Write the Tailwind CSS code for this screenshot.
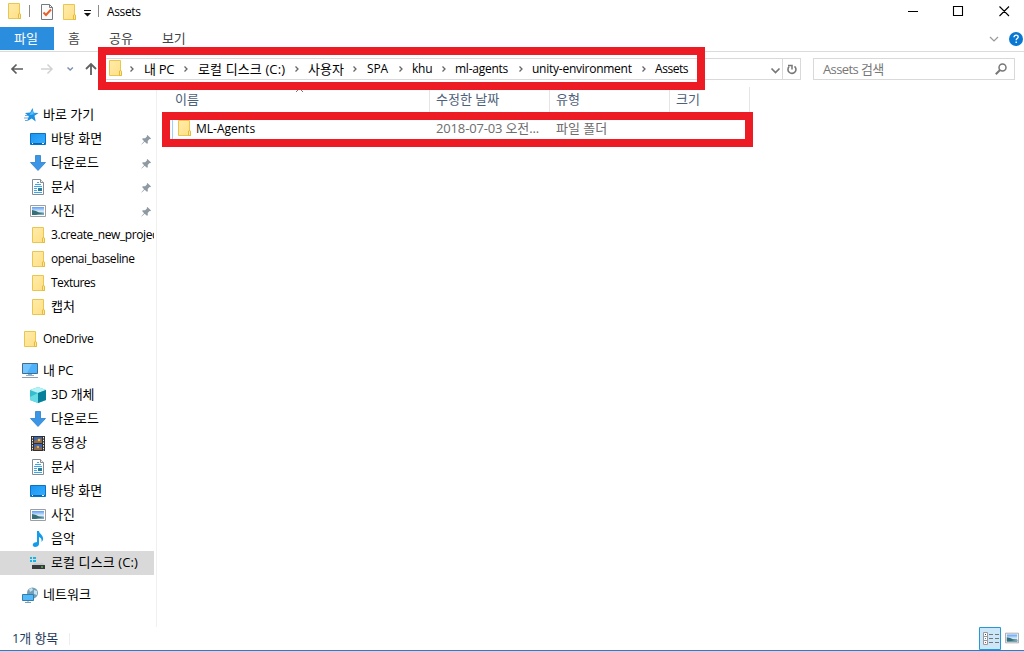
<!DOCTYPE html>
<html lang="ko">
<head>
<meta charset="utf-8">
<title>Assets</title>
<script src="https://cdn.jsdelivr.net/npm/@tailwindcss/browser@4"></script>
</head>
<body class="relative flex h-[651px] w-[1024px] flex-col overflow-hidden whitespace-nowrap bg-white font-['Open_Sans','Noto_Sans_CJK_KR',sans-serif] text-[13px] leading-none text-black">
<svg class="absolute h-0 w-0">
  <defs>
    <linearGradient id="blue" x1="0" y1="0" x2="1" y2="1"><stop offset="0" stop-color="#1c94f0"/><stop offset="1" stop-color="#35b0ff"/></linearGradient>
    <linearGradient id="fold" x1="0" y1="0" x2="1" y2="1"><stop offset="0" stop-color="#ffebaa"/><stop offset="1" stop-color="#ffdf84"/></linearGradient>
    <linearGradient id="sky" x1="0" y1="0" x2="0" y2="1"><stop offset="0" stop-color="#5d9df5"/><stop offset=".55" stop-color="#d9ecf7"/><stop offset="1" stop-color="#4484a0"/></linearGradient>
  </defs>
  <symbol id="folder" viewBox="0 0 16 16"><path d="M2.500.500h11v10l1 1v4h-12z" fill="url(#fold)" stroke="#e8c64f"/><path d="M12.500 15.500v-4.500l1.500-.5.500 1v4z" fill="#ffe79b" stroke="#e5bb3d"/></symbol>
  <symbol id="star" viewBox="0 0 16 16"><path d="M9.500 1l1.200 4.700 4.800.3-4 2.800 1.200 5.700-4-3-4.700 2.700 1.800-5L2 6l5.200-.4z" fill="#1d8fe1"/><path d="M9.500 3l.8 3.500 3 .2-7 1.600z" fill="#55bdf7"/><path d="M2 8.500h3M1 11h4M2 13.500h2" stroke="#68a9d9"/></symbol>
  <symbol id="desktop" viewBox="0 0 16 16"><path d="M.5 2.500h15v11H.5z" fill="url(#blue)" stroke="#0873c4"/><path d="M1 12.500h14" stroke="#0866b0"/><path d="M2 12.500h1m9 0h2" stroke="#fff"/></symbol>
  <symbol id="down" viewBox="0 0 16 16"><path d="M5.500.500h5v7h5L8 15.500.5 7.500h5z" fill="#3c96e6" stroke="#2b7fcb" stroke-width=".8"/></symbol>
  <symbol id="doc" viewBox="0 0 16 16"><path d="M2.500.500h8l3 3v12h-11z" fill="#fff" stroke="#858c91"/><path d="M10.500.500v3h3" fill="#eee" stroke="#858c91"/><path d="M5 5.500h2m0-2h2m-2 2h4M4 7.500h8M4 9.500h3M4 11.500h3M4 13.500h8" stroke="#3da5ec"/><path d="M8 9h4v3H8z" fill="#2b7f9e"/></symbol>
  <symbol id="picture" viewBox="0 0 16 16"><path d="M.5 2.500h15v11H.5z" fill="#fff" stroke="#9b9fa3"/><path d="M2 4h12v8H2z" fill="url(#sky)"/><path d="M2 7l4 1 3 1.500 5 .5v2H2z" fill="#386f76"/><path d="M7 11.500l7-1.500v2H6z" fill="#78a9bd"/></symbol>
  <symbol id="pc" viewBox="0 0 16 16"><path d="M.5.500h15v10H.5z" fill="url(#blue)" stroke="#426d8b"/><path d="M1 1h14v9H1z" fill="#4db2fb"/><path d="M1 1h9L5 10H1z" fill="#72c5ff"/><path d="M6 11h4v1h2v1H4v-1h2z" fill="#8fb0c7"/><path d="M0 14.500h16" stroke="#8a9db6"/></symbol>
  <symbol id="cube" viewBox="0 0 16 16"><path d="M8 0l8 3v10l-8 3-8-3V3z" fill="#35bdcf"/><path d="M0 3l8-3 8 3-8 3z" fill="#b5f2f5"/><path d="M8 6l8-3v10l-8 3z" fill="#087f9a"/><path d="M0 10l8-4v10l-8-3z" fill="#67dce5"/></symbol>
  <symbol id="film" viewBox="0 0 16 16"><path d="M1 1h14v15H1z" fill="#303030"/><path d="M2.500 2v14m11-14v14" stroke="#f2f2f2" stroke-dasharray="1.500 1.200"/><path d="M4 2h8v6H4zM4 9h8v6H4z" fill="#3b65b5"/><path d="M4 6l3-2 1 2 3-3 1 2v3H4zM4 13l3-3 2 3 3-1v3H4z" fill="#8f6a4c"/><circle cx="9" cy="5" r="1.300" fill="#f1c23a"/><circle cx="8" cy="12" r="1.200" fill="#e6ae38"/></symbol>
  <symbol id="music" viewBox="0 0 16 16"><path d="M7 0h2c0 3 5 4 4 9l-1.500 2c.5-3-.5-4-2.500-5v7c0 2-2 3-4 3-3 0-3-4 0-4.500L7 11z" fill="#149be9"/></symbol>
  <symbol id="disk" viewBox="0 0 16 16"><path d="M0 2h2v2H0zM3 2h3v2H3zM0 5h2v2H0zM3 5h3v2H3z" fill="#16b5e9"/><path d="M4 8h9l2 2.500H2z" fill="#c7cbcd"/><path d="M2 10h13v4H2z" fill="#38393b"/><path d="M11 12h2" stroke="#4df047"/></symbol>
  <symbol id="network" viewBox="0 0 16 16"><circle cx="10.500" cy="6" r="5.500" fill="#759fb7"/><path d="M7 2l3-1 1 2-3 2zM12 3l3 1v4l-3-1z" fill="#c8e3ef"/><path d="M.5 7.500h11v6H.5z" fill="#54b9fb" stroke="#347da9"/><path d="M6 14v1M3 15.500h6" stroke="#7e9eb2"/></symbol>
  <symbol id="pin" viewBox="0 0 12 12"><path d="M7 1l4 4-1 .7-.7-.2-2 2 .2 2.500-1 .7L4 8.500.800 11.500l-.4-.4L3.400 8 1.200 5.500l.8-1 2.500.2 2-2L6.300 2z" fill="#8e9aa3"/></symbol>
  <symbol id="chev" viewBox="0 0 6 8"><path d="M1.500 1.500l2.500 2.500-2.500 2.500" fill="none" stroke="#666" stroke-width="1.300"/></symbol>
</svg>

<header class="flex h-[26px] shrink-0 items-start">
  <svg class="ml-1.5 mt-[3px] size-4"><use href="#folder"/></svg>
  <i class="ml-[7px] mt-[5px] h-3 w-px bg-[#8b8b8b]"></i>
  <svg class="ml-[9px] mt-1 h-4 w-4" viewBox="0 0 16 16"><path d="M2.500.500h8l3 3v12h-11z" fill="#fafafa" stroke="#747b80"/><path d="M10.500.500v3h3" fill="none" stroke="#747b80"/><path d="M4.500 8.500L7 11l5-5.500" fill="none" stroke="#e65e2b" stroke-width="1.900"/></svg>
  <svg class="ml-1.5 mt-1 size-4"><use href="#folder"/></svg>
  <svg class="ml-[7px] mt-[10px] h-[7px] w-[7px]" viewBox="0 0 7 7"><path d="M0 0h7v1H0zM0 3h7L3.500 6.500z" fill="#111"/></svg>
  <i class="ml-[7px] mt-[5px] h-3 w-px bg-[#8b8b8b]"></i>
  <span class="ml-[8px] mt-[5px] text-[12px] leading-[14px] tracking-[-.35px]">Assets</span>
  <svg class="ml-auto h-6 w-[124px]" viewBox="0 0 124 24"><path d="M8 11.500h10M53.500 6.500h9v9h-9zM99.500 6.500l9.500 9.500m0-9.500L99.500 16" fill="none" stroke="#000" stroke-width="1.100"/></svg>
</header>

<nav class="flex h-[26px] shrink-0 items-start border-b border-[#dadbdc] leading-[23px] text-[#444]">
  <span class="mt-px h-[23px] w-[54px] bg-[#2a8dde] pr-[2px] text-center text-white">파일</span>
  <span class="mt-px ml-[14px]">홈</span>
  <span class="mt-px ml-[29px]">공유</span>
  <span class="mt-px ml-[29px]">보기</span>
  <svg class="ml-auto h-[24px] w-[36px]" viewBox="0 0 36 24"><path d="M2 11l4 4 4-4" fill="none" stroke="#999" stroke-width="1.200"/><circle cx="28" cy="13" r="7" fill="#0878d2"/><path d="M26 11.300c0-3 4.200-2.600 4.200-.3 0 1.600-2 1.500-2 3.200m0 1.300v1.500" stroke="#fff" stroke-width="1.400" fill="none"/></svg>
</nav>

<section class="flex h-[35px] shrink-0 items-start pt-[6px]">
  <svg class="h-[22px] w-[98px]" viewBox="0 0 98 22" fill="none"><path d="M12 11h11M16.500 6.500L12 11l4.500 4.500" stroke="#5d5d5d" stroke-width="1.700"/><path d="M41 11h11M47.500 6.500L52 11l-4.500 4.500" stroke="#d2d2d2" stroke-width="1.500"/><path d="M67.500 9.500l2.700 2.500 2.700-2.500" stroke="#7c91ad" stroke-width="1.500"/><path d="M91 17V6M86 11l5-5 5 5" stroke="#606060" stroke-width="1.800"/></svg>
  <div class="flex h-[22px] w-[703px] items-center border border-[#d9d9d9]">
    <svg class="ml-[8px] mb-[2px] size-4 shrink-0"><use href="#folder"/></svg>
    <svg class="ml-[6px] h-2 w-1.5"><use href="#chev"/></svg><span class="ml-[9px] w-[31px] tracking-[-.3px]">내 PC</span>
    <svg class="ml-[8px] h-2 w-1.5"><use href="#chev"/></svg><span class="ml-[9px] w-[87px] tracking-[.12px]">로컬 디스크 (C:)</span>
    <svg class="ml-[9px] h-2 w-1.5"><use href="#chev"/></svg><span class="ml-[8px] w-[37px]">사용자</span>
    <svg class="ml-[7px] h-2 w-1.5"><use href="#chev"/></svg><span class="ml-[9px] w-[22px] text-[12px] tracking-[-.1px]">SPA</span>
    <svg class="ml-[9px] h-2 w-1.5"><use href="#chev"/></svg><span class="ml-[8px] w-[20px] text-[12px] tracking-[-.2px]">khu</span>
    <svg class="ml-[9px] h-2 w-1.5"><use href="#chev"/></svg><span class="ml-[8px] w-[54px] text-[12px] tracking-[-.25px]">ml-agents</span>
    <svg class="ml-[9px] h-2 w-1.5"><use href="#chev"/></svg><span class="ml-[8px] w-[100px] text-[12px] tracking-[-.25px]">unity-environment</span>
    <svg class="ml-[9px] h-2 w-1.5"><use href="#chev"/></svg><span class="ml-[8px] w-[34px] text-[12px] tracking-[-.45px]">Assets</span>
    <svg class="ml-auto h-[20px] w-[31px] shrink-0" viewBox="0 0 31 20" fill="none"><path d="M2.500 9.500l4 4 4-4" stroke="#777" stroke-width="1.700"/><path d="M13.500 0v20" stroke="#d9d9d9"/><path d="M25.500 7.300a4 4 0 1 1-5.300.2" stroke="#777" stroke-width="1.600"/><path d="M19 6.500h4v4" stroke="#777" stroke-width="1.500"/></svg>
  </div>
  <div class="ml-3 flex h-[22px] w-[202px] items-center justify-between border border-[#d9d9d9] pl-[9px] pr-[7px] text-[#777]">
    <span class="tracking-[-.6px]">Assets 검색</span>
    <svg class="h-3 w-3" viewBox="0 0 12 12" fill="none" stroke="#777"><circle cx="7.500" cy="4.500" r="3.500" stroke-width="1.500"/><path d="M5 7L.8 11.200" stroke-width="2"/></svg>
  </div>
</section>

<main class="flex h-[540px] shrink-0">
  <aside class="flex w-[157px] shrink-0 flex-col border-r border-[#f0f0f0] pt-[16px] [&>div]:flex [&>div]:h-6 [&>div]:w-[154px] [&>div]:shrink-0 [&>div]:items-center [&>div]:gap-[5px] [&>div]:overflow-hidden [&>div]:pl-[30px] [&>div>svg]:size-4 [&>div>svg]:shrink-0 [&>div>span]:pb-[2px]">
    <div class="!pl-[23px] !gap-1"><svg><use href="#star"/></svg><span>바로 가기</span></div>
    <div><svg><use href="#desktop"/></svg><span>바탕 화면</span><svg class="ml-auto mr-[2px] !size-[11px]"><use href="#pin"/></svg></div>
    <div><svg><use href="#down"/></svg><span>다운로드</span><svg class="ml-auto mr-[2px] !size-[11px]"><use href="#pin"/></svg></div>
    <div><svg><use href="#doc"/></svg><span>문서</span><svg class="ml-auto mr-[2px] !size-[11px]"><use href="#pin"/></svg></div>
    <div><svg><use href="#picture"/></svg><span>사진</span><svg class="ml-auto mr-[2px] !size-[11px]"><use href="#pin"/></svg></div>
    <div class="text-[12px] tracking-[-.4px]"><svg><use href="#folder"/></svg>3.create_new_project</div>
    <div class="text-[12px] tracking-[-.45px]"><svg><use href="#folder"/></svg>openai_baseline</div>
    <div class="text-[12px] tracking-[-.55px]"><svg><use href="#folder"/></svg>Textures</div>
    <div><svg><use href="#folder"/></svg><span>캡처</span></div>
    <div class="mt-2 !pl-[22px] text-[12px] tracking-[-.3px]"><svg><use href="#folder"/></svg>OneDrive</div>
    <div class="mt-2 !pl-[22px] tracking-[-.3px]"><svg><use href="#pc"/></svg><span>내 PC</span></div>
    <div class="tracking-[-.2px]"><svg><use href="#cube"/></svg><span>3D 개체</span></div>
    <div><svg><use href="#down"/></svg><span>다운로드</span></div>
    <div><svg><use href="#film"/></svg><span>동영상</span></div>
    <div><svg><use href="#doc"/></svg><span>문서</span></div>
    <div><svg><use href="#desktop"/></svg><span>바탕 화면</span></div>
    <div><svg><use href="#picture"/></svg><span>사진</span></div>
    <div><svg><use href="#music"/></svg><span>음악</span></div>
    <div class="bg-[#d9d9d9] tracking-[.1px]"><svg><use href="#disk"/></svg><span>로컬 디스크 (C:)</span></div>
    <div class="mt-2 !pl-[22px]"><svg><use href="#network"/></svg><span>네트워크</span></div>
  </aside>
  <div class="flex flex-col">
    <div class="flex h-[25px] text-[#4c607a] leading-[25px] [&>span]:border-r [&>span]:border-[#e5e5e5]">
      <span class="w-[273px] pl-[18px]">이름</span><span class="w-[120px] pl-[6px]">수정한 날짜</span><span class="w-[120px] pl-[6px]">유형</span><span class="w-[80px] pl-[6px]">크기</span>
    </div>
    <div class="mt-[4px] flex h-[24px] items-center text-[#6d6d6d]">
      <i class="ml-[15px] h-[22px] w-px bg-[#99d1ff]"></i>
      <svg class="ml-[3px] size-4"><use href="#folder"/></svg>
      <span class="ml-1 w-[240px] pt-[2px] text-[12px] text-black">ML-Agents</span>
      <span class="w-[120px] tracking-[-.15px]">2018-07-03 오전...</span><span>파일 폴더</span>
    </div>
  </div>
</main>

<footer class="flex h-[24px] shrink-0 items-center border-b border-[#1883d7] pl-[12px] text-[#1e395b]">
  <span class="w-[57px] tracking-[-.1px]">1개 항목</span><i class="h-3 w-px bg-[#eee]"></i>
  <svg class="ml-auto h-[23px] w-[22px]" viewBox="0 0 22 23"><path d="M.5.500h21v22H.5z" fill="#cce8f8" stroke="#2698d8"/><path d="M4.500 5.500h4v4h-4zM4.500 9.500h4v4h-4zM4.500 13.500h4v4h-4z" fill="#fff" stroke="#999"/><path d="M10 7.500h4m2 0h4m-10 4h4m2 0h4m-10 4h4m2 0h4" stroke="#777"/><path d="M6 7.500h1" stroke="#444"/><path d="M6 11.500h1" stroke="#3984ef"/><path d="M6 15.500h1" stroke="#d33"/></svg>
  <svg class="mb-[2px] ml-1 mr-[5px] h-[14px] w-[14px]" viewBox="0 1 16 14"><use href="#picture" width="16" height="16"/></svg>
</footer>

<svg class="absolute left-[295px] top-[87px] h-[5px] w-[9px]" viewBox="0 0 9 5"><path d="M1 5l3.500-3.500L8 5" fill="none" stroke="#777"/></svg>
<div class="absolute left-[98px] top-[47px] h-[43px] w-[607px] border-8 border-[#ed1c24]"></div>
<div class="absolute left-[162px] top-[112px] h-[35px] w-[591px] border-8 border-[#ed1c24]"></div>
</body>
</html>
